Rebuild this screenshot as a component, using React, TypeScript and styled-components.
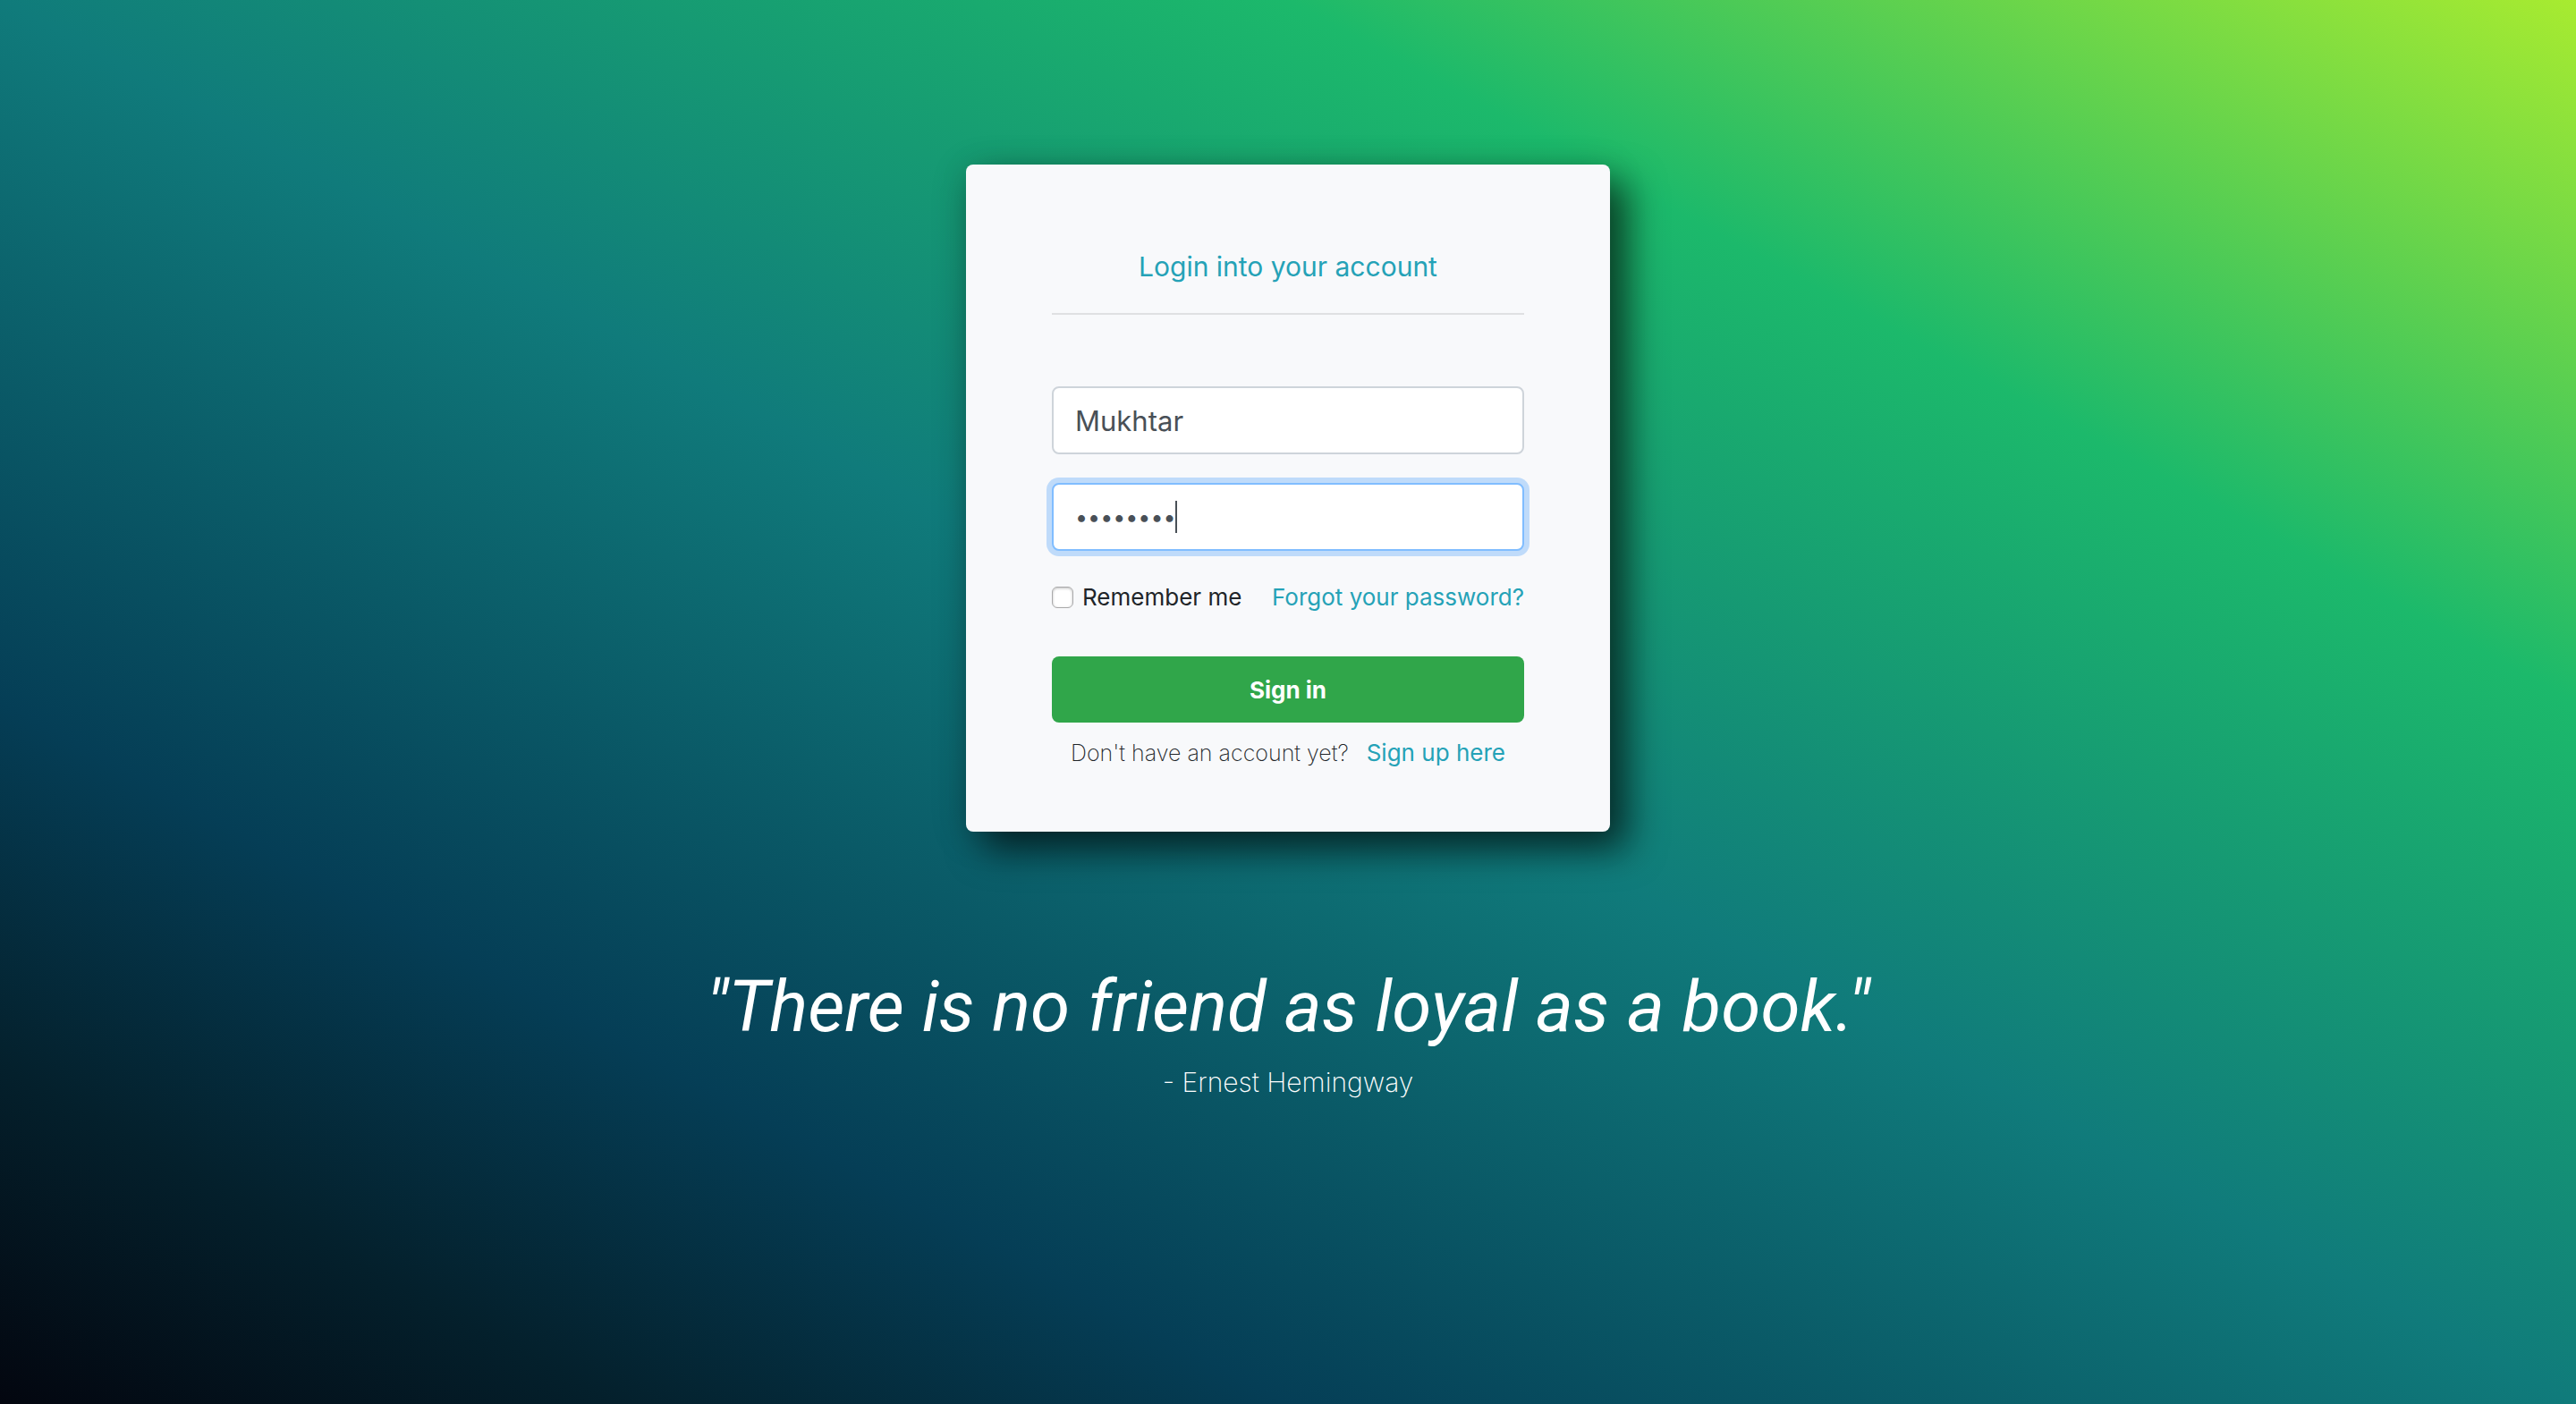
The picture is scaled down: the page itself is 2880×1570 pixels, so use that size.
import React from "react";
import styled, { createGlobalStyle } from "styled-components";

const GlobalStyle = createGlobalStyle`
  *, *::before, *::after { box-sizing: border-box; }
  body {
    margin: 0;
    font-family: Inter, "Liberation Sans", sans-serif;
    font-size: 26px;
    line-height: 40px;
    color: #212529;
    -webkit-font-smoothing: antialiased;
  }
`;

const Page = styled.main`
  min-height: 100vh;
  display: flex;
  flex-direction: column;
  align-items: center;
  padding: 184px 32px 96px;
  background: linear-gradient(to top right, #03060f 0%, #04202c 12%, #053e56 25%, #107b7b 50%, #1cb96b 75%, #a8eb30 100%);
`;

const Card = styled.form`
  width: 100%;
  max-width: 720px;
  padding: 94px 96px 68px;
  display: flex;
  flex-direction: column;
  border-radius: 8px;
  background: #f8f9fb;
  box-shadow: 20px 20px 40px rgba(0, 0, 0, 0.6), 0 6px 40px rgba(0, 0, 0, 0.19);
`;

const Title = styled.h1`
  margin: 0 0 80px;
  padding-bottom: 32px;
  border-bottom: 2px solid #dfe0e2;
  color: #25a2b7;
  font-size: 30px;
  line-height: 40px;
  font-weight: 400;
  text-align: center;
`;

const FieldBox = styled.div`
  position: relative;
  margin-bottom: 32px;
`;

const Field = styled.input`
  display: block;
  width: 100%;
  height: 76px;
  padding: 0 24px;
  border: 2px solid #ced4da;
  border-radius: 8px;
  background: #fff;
  color: #495057;
  caret-color: transparent;
  font-family: inherit;
  font-size: 31px;
  outline: none;

  &[type="password"] {
    font-size: 25px;
  }

  &:focus {
    border-color: #80bdff;
    box-shadow: 0 0 0 6px #bfdbfa;
  }
`;

const Caret = styled.span`
  position: absolute;
  top: 20px;
  left: 138px;
  width: 2px;
  height: 36px;
  background: #495057;
  pointer-events: none;
`;

const Options = styled.div`
  display: flex;
  align-items: center;
  justify-content: space-between;
  margin-bottom: 46px;
  white-space: nowrap;
`;

const Remember = styled.label`
  display: flex;
  align-items: center;
  gap: 10px;
`;

const Checkbox = styled.input`
  appearance: none;
  width: 24px;
  height: 24px;
  margin: 0;
  border: 1px solid #a9a9aa;
  border-radius: 6px;
  background: #fff;
  box-shadow: inset 0 1px 3px rgba(0, 0, 0, 0.25);
`;

const Link = styled.a`
  color: #25a2b7;
  font-size: 26px;
  font-weight: 400;
  text-decoration: none;
`;

const SubmitButton = styled.button`
  height: 74px;
  border: 0;
  border-radius: 8px;
  background: #30a64a;
  color: #fff;
  font-family: inherit;
  font-size: 26px;
  font-weight: 700;
`;

const SignUp = styled.p`
  display: flex;
  justify-content: center;
  align-items: baseline;
  gap: 20px;
  margin: 14px 0 0;
  font-size: 25px;
  font-weight: 200;
  white-space: nowrap;
`;

const Quote = styled.figure`
  margin: 148px 0 0;
  color: #fff;
  text-align: center;
`;

const QuoteText = styled.blockquote`
  margin: 0;
  font-family: Roboto, "Liberation Sans", sans-serif;
  font-size: 80px;
  line-height: 96px;
  font-style: italic;
`;

const QuoteAuthor = styled.figcaption`
  margin-top: 12px;
  font-size: 30px;
  line-height: 48px;
  font-weight: 200;
`;

export default function App() {
  return (
    <>
      <GlobalStyle />
      <Page>
        <Card onSubmit={(event: React.FormEvent) => event.preventDefault()}>
          <Title>Login into your account</Title>
          <FieldBox>
            <Field type="text" aria-label="Username" defaultValue="Mukhtar" />
          </FieldBox>
          <FieldBox>
            <Field type="password" aria-label="Password" defaultValue="password" autoFocus />
            <Caret aria-hidden="true" />
          </FieldBox>
          <Options>
            <Remember>
              <Checkbox type="checkbox" />
              Remember me
            </Remember>
            <Link href="#forgot">Forgot your password?</Link>
          </Options>
          <SubmitButton type="submit">Sign in</SubmitButton>
          <SignUp>
            Don't have an account yet?
            <Link href="#signup">Sign up here</Link>
          </SignUp>
        </Card>
        <Quote>
          <QuoteText>"There is no friend as loyal as a book."</QuoteText>
          <QuoteAuthor>- Ernest Hemingway</QuoteAuthor>
        </Quote>
      </Page>
    </>
  );
}
